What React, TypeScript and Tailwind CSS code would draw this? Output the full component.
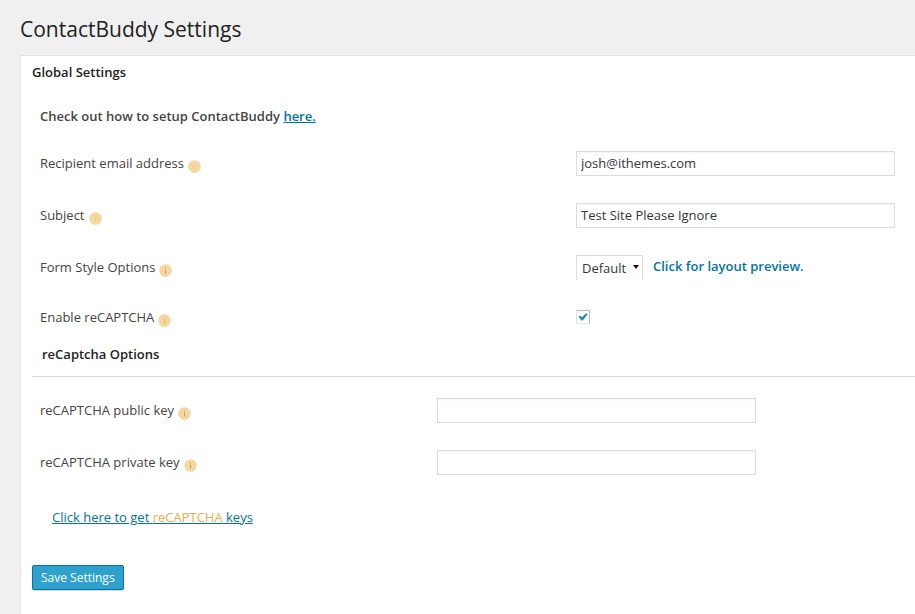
import type { ReactNode } from "react";

function InfoIcon({ tone }: { tone: string }) {
  return (
    <svg className="mt-[6px] size-[13px] shrink-0" viewBox="0 0 13 13" aria-hidden="true">
      <circle cx="6.5" cy="6.5" r="6.3" fill="#f4d8a0" />
      <path d="M6.5 3.5v1.2M6.5 5.5v4" stroke={tone} strokeWidth="1" />
    </svg>
  );
}

type RowProps = { id: string; label: string; tone: string; narrow?: boolean; children: ReactNode };

function Row({ id, label, tone, narrow, children }: RowProps) {
  const columns = narrow ? "grid-cols-[397fr_478fr]" : "grid-cols-[536fr_339fr]";
  return (
    <div className={`grid h-[52px] items-center pl-2 ${columns}`}>
      <div className="flex items-center gap-1">
        <label htmlFor={id}>{label}</label>
        <InfoIcon tone={tone} />
      </div>
      <div className="flex items-center pr-5">{children}</div>
    </div>
  );
}

const field =
  "h-[25px] w-full max-w-[319px] border border-[#dddddd] bg-white px-1 text-[13px] text-[#32373c] shadow-[inset_0_1px_2px_rgba(0,0,0,0.04)] outline-none";

export default function App() {
  return (
    <div className="flex min-h-screen flex-col bg-[#f0f0f0] pl-5 font-['Open_Sans',sans-serif] text-[13px] leading-5 text-[#444444]">
      <h1 className="pt-[13px] pb-[10px] text-[21px] leading-8 text-[#222222]">ContactBuddy Settings</h1>
      <main className="grow border-t border-l border-[#e2e2e2] bg-white pb-6 pl-[11px]">
        <form onSubmit={(e) => e.preventDefault()}>
          <h2 className="pt-[6px] font-semibold text-[#222222]">Global Settings</h2>
          <p className="pt-6 pb-[11px] pl-2 font-semibold">
            Check out how to setup ContactBuddy{" "}
            <a href="#setup" className="text-[#0074a2] underline">here.</a>
          </p>

          <Row id="recipient" label="Recipient email address" tone="#e0d08c">
            <input id="recipient" type="text" defaultValue="josh@ithemes.com" className={field} />
          </Row>
          <Row id="subject" label="Subject" tone="#e0d08c">
            <input id="subject" type="text" defaultValue="Test Site Please Ignore" className={field} />
          </Row>
          <Row id="style" label="Form Style Options" tone="#cf9f62">
            <div className="relative mr-[10px]">
              <select
                id="style"
                className="h-[25px] w-[67px] appearance-none border border-b-0 border-[#dddddd] bg-white px-[5px] text-[13px] text-[#32373c] outline-none"
              >
                <option>Default</option>
              </select>
              <svg className="pointer-events-none absolute top-[10px] right-1 h-[4px] w-[6px]" viewBox="0 0 6 4" aria-hidden="true">
                <path d="M0 0h6L3 4z" fill="#111111" />
              </svg>
            </div>
            <a href="#preview" className="pb-[2px] font-semibold whitespace-nowrap text-[#0074a2]">Click for layout preview.</a>
          </Row>
          <div className="-mt-[2px] -mb-[3px]">
            <Row id="recaptcha" label="Enable reCAPTCHA" tone="#d8b680">
              <div className="relative size-[14px]">
                <input
                  id="recaptcha"
                  type="checkbox"
                  defaultChecked
                  className="peer block size-[14px] appearance-none border border-t-[#b4b9be] border-r-[#b4b9be] border-b-[#e8e8e8] border-l-[#dddddd] bg-white"
                />
                <svg className="pointer-events-none absolute top-[3px] left-[2px] hidden h-[8px] w-[10px] peer-checked:block" viewBox="0 0 10 8" aria-hidden="true">
                  <path d="M0.3 3.6L2.3 2.8L4 4.2L8 0.2L9.6 1.2L4.8 7.6H3.5z" fill="#1e8cbe" />
                </svg>
              </div>
            </Row>
          </div>

          <h3 className="border-b border-[#dddddd] pt-1 pb-3 pl-[10px] font-semibold text-[#222222]">reCaptcha Options</h3>

          <div className="pt-[7px]">
            <Row id="public-key" label="reCAPTCHA public key" tone="#c79a58" narrow>
              <input id="public-key" type="text" className={field} />
            </Row>
            <Row id="private-key" label="reCAPTCHA private key" tone="#c79a58" narrow>
              <input id="private-key" type="text" className={field} />
            </Row>
          </div>

          <p className="pt-[19px] pl-5">
            <a href="#keys" className="text-[#0074a2] underline">
              Click here to get <span className="text-[#e9b04a]">reCAPTCHA</span> keys
            </a>
          </p>
          <button
            type="submit"
            className="mt-[38px] block h-[25px] rounded-[2px] border border-[#0074a2] bg-[#2ea2cc] px-2 text-[12px] leading-5 text-white shadow-[0_1px_0_rgba(0,0,0,0.15)]"
          >
            Save Settings
          </button>
        </form>
      </main>
    </div>
  );
}
